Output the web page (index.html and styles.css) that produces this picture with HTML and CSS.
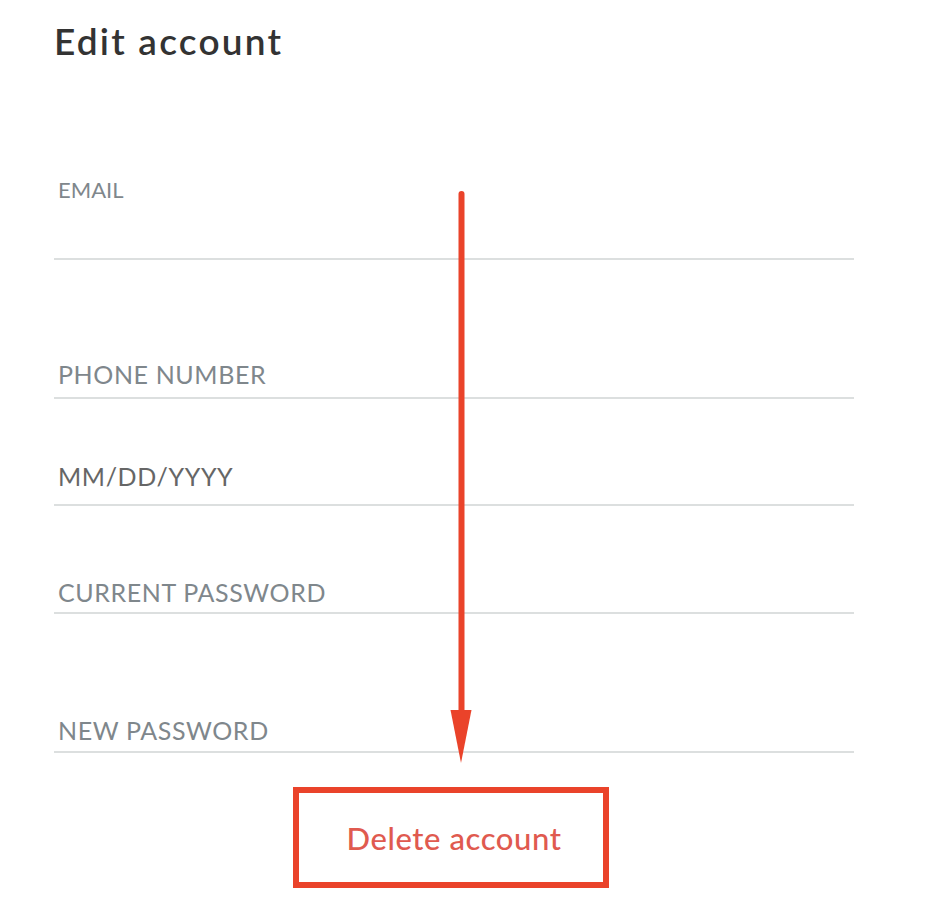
FILE: index.html
```html
<!DOCTYPE html>
<html lang="en">
<head>
    <meta charset="UTF-8">
    <meta name="viewport" content="width=device-width, initial-scale=1.0">
    <title>Edit account</title>
    <link rel="stylesheet" href="styles.css">
</head>
<body>
    <div class="page">
        <h1>Edit account</h1>
        <form class="account-form">
            <div class="field field-email">
                <label for="email">EMAIL</label>
                <input type="email" id="email" name="email">
            </div>
            <div class="field field-phone">
                <input type="tel" id="phone" name="phone" placeholder="PHONE NUMBER">
            </div>
            <div class="field field-date">
                <input type="text" id="birthday" name="birthday" value="MM/DD/YYYY">
            </div>
            <div class="field field-current">
                <input type="password" id="current" name="current" placeholder="CURRENT PASSWORD">
            </div>
            <div class="field field-new">
                <input type="password" id="new" name="new" placeholder="NEW PASSWORD">
            </div>
            <div class="actions">
                <div class="highlight">
                    <button type="button" class="delete">Delete account</button>
                </div>
            </div>
        </form>

        <!-- annotation arrow pointing at the button -->
        <svg class="arrow" width="23" height="575" viewBox="0 0 23 575">
            <rect x="8.5" y="1" width="6" height="525" rx="3" fill="#ea432a"/>
            <polygon points="0.5,520 21.5,520 11,573" fill="#ea432a"/>
        </svg>
    </div>
</body>
</html>
```

FILE: styles.css
```css
:root {
    --clr-label: #7f878c;
    --clr-line: #dcdfdf;
    --clr-red: #ea432a;
}

* {
    box-sizing: border-box;
    margin: 0;
    padding: 0;
}

body {
    font-family: 'Lato', 'Liberation Sans', sans-serif;
    background-color: #ffffff;
    color: #333333;
}

.page {
    position: relative;
    width: 800px;
    margin-left: 54px;
    padding-top: 22px;
}

h1 {
    font-size: 37px;
    line-height: 37px;
    font-weight: 600;
    color: #333333;
    letter-spacing: 2.2px;
}

.account-form {
    margin-top: 120px;
}

.field {
    display: flex;
    flex-direction: column;
    padding: 0 0 8px 4px;
    border-bottom: 2px solid var(--clr-line);
}

.field label {
    font-size: 22px;
    line-height: 22px;
    color: var(--clr-label);
}

.field input {
    height: 25px;
    border: none;
    outline: none;
    padding: 0;
    font-family: inherit;
    font-size: 25px;
    line-height: 25px;
    color: #666666;
    letter-spacing: 0.6px;
    background: transparent;
}

.field input::placeholder {
    color: var(--clr-label);
    opacity: 1;
}

.field-email {
    padding-bottom: 10px;
}

.field-email input {
    margin-top: 22px;
}

.field-phone {
    padding-top: 101px;
    padding-bottom: 11px;
}

.field-date {
    padding-top: 64px;
    padding-bottom: 16px;
}

.field-current {
    padding-top: 73px;
}

.field-new {
    padding-top: 103px;
    padding-bottom: 9px;
}

.actions {
    display: flex;
    justify-content: center;
    margin-top: 34px;
    padding-right: 6px;
}

.highlight {
    width: 316px;
    height: 101px;
    border: 6px solid var(--clr-red);
    display: flex;
    align-items: center;
    justify-content: center;
}

.delete {
    border: none;
    background: none;
    font-family: inherit;
    font-size: 31px;
    font-weight: 500;
    letter-spacing: 0.6px;
    color: #e05a4f;
    cursor: pointer;
    padding-left: 6px;
}

.arrow {
    position: absolute;
    left: 396px;
    top: 190px;
}
```
